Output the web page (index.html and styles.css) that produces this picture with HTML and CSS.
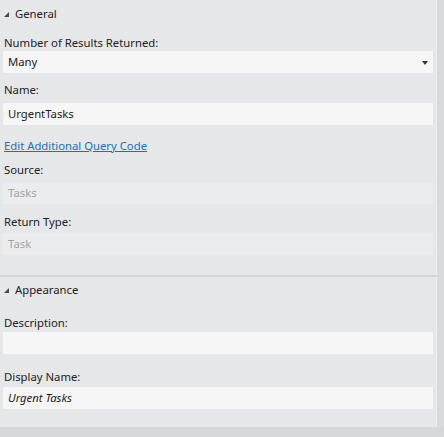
FILE: index.html
```html
<!DOCTYPE html>
<html>
<head>
<meta charset="utf-8">
<link rel="stylesheet" href="styles.css">
</head>
<body>
<div class="window">
  <div class="main">
    <div class="panel">
      <div class="section">
        <div class="header header-first"><span class="expander"></span>General</div>
        <div class="label l1">Number of Results Returned:</div>
        <div class="input i1 select">Many<span class="arrow"></span></div>
        <div class="label l2">Name:</div>
        <div class="input i2">UrgentTasks</div>
        <a class="link">Edit Additional Query Code</a>
        <div class="label l3">Source:</div>
        <div class="input disabled i3">Tasks</div>
        <div class="label l4">Return Type:</div>
        <div class="input disabled i4">Task</div>
      </div>
      <div class="separator"></div>
      <div class="section">
        <div class="header header-second"><span class="expander"></span>Appearance</div>
        <div class="label l5">Description:</div>
        <div class="input i5"></div>
        <div class="label l6">Display Name:</div>
        <div class="input i6 italic">Urgent Tasks</div>
      </div>
    </div>
    <div class="scroll"></div>
  </div>
  <div class="bottom"></div>
</div>
</body>
</html>
```

FILE: styles.css
```css
* { box-sizing: border-box; }
html, body { margin: 0; padding: 0; }
body {
  width: 444px;
  height: 437px;
  background: #e6e7e9;
  font-family: "Noto Sans", "Open Sans", sans-serif;
  font-size: 11.3px;
  color: #222;
  overflow: hidden;
}
.window { display: flex; flex-direction: column; height: 437px; }
.main { display: flex; flex-direction: row; height: 427px; }
.panel {
  flex: 1;
  border-right: 1px solid #eeeff0;
  padding-right: 3px;
}
.scroll { width: 7px; background: #d9dadc; }
.bottom { height: 10px; background: #d6d7d9; }

.section { display: flex; flex-direction: column; }
.header {
  display: flex;
  align-items: center;
  padding-left: 4px;
  line-height: 17px;
}
.header-first { height: 26px; }
.header-second { height: 24px; }
.expander {
  width: 0; height: 0;
  border-left: 5px solid transparent;
  border-bottom: 5px solid #4a4a4a;
  margin-right: 6px;
  margin-top: 2px;
}
.label { padding-left: 4px; line-height: 17px; height: 17px; }
.input {
  height: 22px;
  margin-left: 3px;
  background: #f6f6f6;
  padding-left: 5px;
  line-height: 22px;
  position: relative;
}
.disabled { background: #ebecee; color: #a3a3a3; }
.italic { font-style: italic; }
.select .arrow {
  position: absolute;
  right: 5px;
  top: 10px;
  width: 0; height: 0;
  border-left: 3.5px solid transparent;
  border-right: 3.5px solid transparent;
  border-top: 4px solid #333;
}
.link {
  display: block;
  margin-top: 12px;
  padding-left: 4px;
  line-height: 17px;
  height: 17px;
  color: #1f6fb8;
  text-decoration: underline;
}
.l1 { margin-top: 8px; }
.l2 { margin-top: 8px; }
.i2 { margin-top: 5px; }
.l3 { margin-top: 7px; }
.i3 { margin-top: 4px; }
.l4 { margin-top: 9px; }
.i4 { margin-top: 3px; }
.separator { margin-top: 20px; height: 2px; background: #d3d4d6; margin-right: -4px; }
.l5 { margin-top: 13px; }
.i5 { margin-top: 1px; }
.l6 { margin-top: 14px; }
.i6 { margin-top: 2px; }
```
